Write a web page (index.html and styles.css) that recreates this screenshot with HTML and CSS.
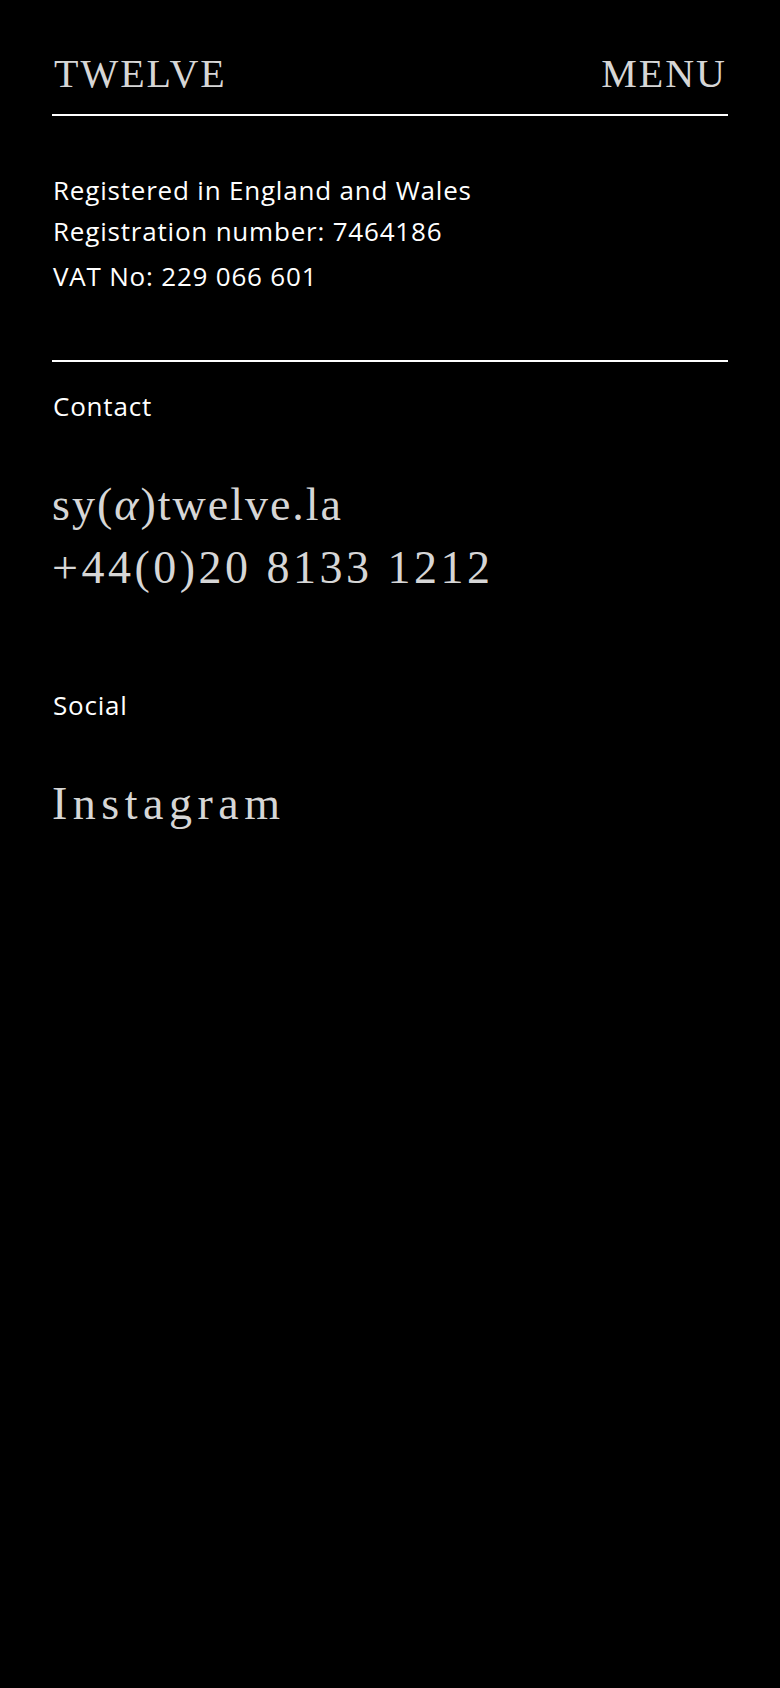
FILE: index.html
```html
<!DOCTYPE html>
<html lang="en">
<head>
<meta charset="utf-8">
<meta name="viewport" content="width=device-width, initial-scale=1">
<title>Twelve</title>
<link rel="stylesheet" href="styles.css">
</head>
<body>
<div class="page">
  <header class="site-header">
    <a class="logo" href="#">TWELVE</a>
    <a class="menu" href="#">MENU</a>
  </header>

  <section class="info">
    <p class="info-line">Registered in England and Wales<br>Registration number: 7464186</p>
    <p class="info-line vat">VAT No: 229 066 601</p>
  </section>

  <section class="block contact">
    <h2 class="label">Contact</h2>
    <div class="links">
      <a class="big email" href="#">sy(<i class="alpha">α</i>)twelve.la</a>
      <a class="big phone" href="#">+44(0)20 8133 1212</a>
    </div>
  </section>

  <section class="block social">
    <h2 class="label">Social</h2>
    <div class="links">
      <a class="big insta" href="#">Instagram</a>
    </div>
  </section>
</div>
</body>
</html>
```

FILE: styles.css
```css
html, body {
  margin: 0;
  padding: 0;
  background: #000;
}

body {
  min-height: 1688px;
  color: #fff;
  font-family: "Open Sans", "Liberation Sans", sans-serif;
}

.page {
  padding: 53px 52px 0 52px;
}

a {
  color: inherit;
  text-decoration: none;
}

.site-header {
  display: flex;
  justify-content: space-between;
  align-items: flex-start;
  padding-bottom: 19px;
  border-bottom: 2px solid #fff;
  font-family: "Liberation Serif", "Times New Roman", serif;
  font-size: 40px;
  line-height: 42px;
  color: #d6d6d6;
}

.logo, .menu {
  display: block;
  letter-spacing: 2px;
}

.logo {
  margin-left: 2px;
}

.menu {
  margin-right: 1px;
}

.info {
  padding-top: 54px;
  padding-bottom: 63px;
  border-bottom: 2px solid #fff;
}

.info-line {
  margin: 0 0 0 1px;
  font-size: 26px;
  line-height: 41px;
  font-weight: 400;
  letter-spacing: 0.8px;
}

.vat {
  margin-top: 4px;
}

.block {
  display: flex;
  flex-direction: column;
  gap: 46px;
}

.contact {
  padding-top: 24px;
}

.social {
  padding-top: 86px;
}

.label {
  margin: 0 0 0 1px;
  font-size: 26px;
  line-height: 41px;
  font-weight: 400;
  letter-spacing: 0.8px;
}

.links {
  display: flex;
  flex-direction: column;
}

.big {
  display: block;
  font-family: "Liberation Serif", "Times New Roman", serif;
  font-size: 46px;
  line-height: 63px;
  letter-spacing: 2px;
  color: #d6d6d6;
}

.phone {
  letter-spacing: 3.5px;
}

.insta {
  letter-spacing: 5.5px;
}

.alpha {
  font-style: italic;
}
```
